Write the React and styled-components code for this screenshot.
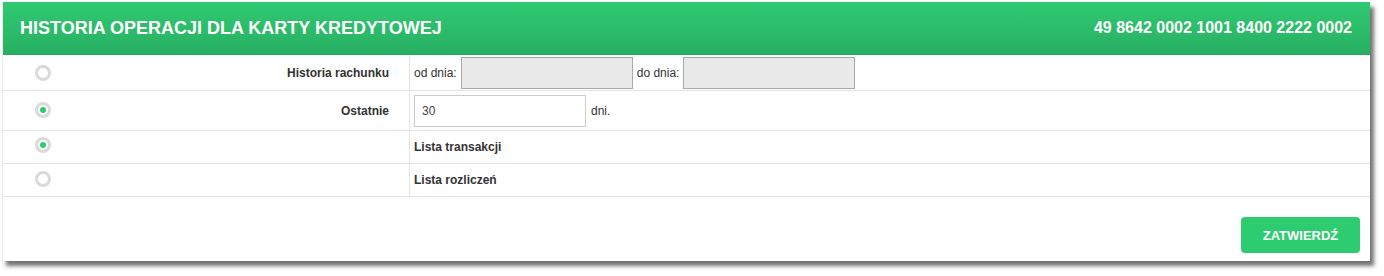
import React from "react";
import styled, { createGlobalStyle } from "styled-components";

const Global = createGlobalStyle`
  html, body { margin: 0; padding: 0; background: #fff; }
  body { font-family: "Liberation Sans", Arial, sans-serif; color: #333; }
`;

const Page = styled.div`
  padding: 2px 14px 14px 2px;
`;

const Panel = styled.div`
  width: 1368px;
  background: #fff;
  box-shadow: 4px 5px 4px rgba(0, 0, 0, 0.55);
  border-left: 1px solid #ececec;
  box-sizing: border-box;
`;

const Header = styled.div`
  height: 52px;
  display: flex;
  align-items: center;
  justify-content: space-between;
  padding: 0 18px 0 17px;
  background: linear-gradient(#30c972, #27b062);
  color: #fff;
  font-weight: bold;
  border-bottom: 1px solid #26a95d;
`;

const Title = styled.div`
  font-size: 18px;
`;

const Account = styled.div`
  font-size: 16px;
`;

const Row = styled.div`
  display: grid;
  grid-template-columns: 407px 1fr;
  border-bottom: 1px solid #e4e4e4;
  min-height: ${(p) => p.$h}px;
`;

const LabelCell = styled.div`
  display: flex;
  align-items: center;
  justify-content: space-between;
  padding: 0 20px 0 32px;
  border-right: 1px solid #e4e4e4;
  font-size: 12px;
  font-weight: bold;
  color: #333;
`;

const ValueCell = styled.div`
  display: flex;
  align-items: center;
  gap: 4px;
  padding: 0 4px;
  font-size: 12px;
  color: #333;
  font-weight: ${(p) => (p.$bold ? "bold" : "normal")};
`;

const Radio = styled.span`
  width: 16px;
  height: 16px;
  box-sizing: border-box;
  border-radius: 50%;
  border: 3px solid #dadada;
  background: #fff;
  display: flex;
  align-items: center;
  justify-content: center;
  margin-top: ${(p) => p.$shift || 0}px;
  &::after {
    content: "";
    width: 6px;
    height: 6px;
    border-radius: 50%;
    background: ${(p) => (p.$checked ? "#2ecc71" : "transparent")};
  }
`;

const DateInput = styled.div`
  width: 172px;
  height: 32px;
  box-sizing: border-box;
  background: #e9e9e9;
  border: 1px solid #a9a9a9;
`;

const NumberInput = styled.div`
  width: 172px;
  height: 32px;
  box-sizing: border-box;
  border: 1px solid #cccccc;
  display: flex;
  align-items: center;
  padding: 0 7px;
  font-size: 12px;
  color: #444;
  margin-right: 1px;
`;

const Footer = styled.div`
  display: flex;
  justify-content: flex-end;
  padding: 20px 10px 8px;
`;

const Button = styled.button`
  width: 119px;
  height: 36px;
  border: none;
  border-radius: 4px;
  background: #2ecc71;
  color: #fff;
  font-family: "Liberation Sans", Arial, sans-serif;
  font-size: 13px;
  font-weight: bold;
`;

export default function App() {
  return (
    <>
      <Global />
      <Page>
        <Panel>
          <Header>
            <Title>HISTORIA OPERACJI DLA KARTY KREDYTOWEJ</Title>
            <Account>49 8642 0002 1001 8400 2222 0002</Account>
          </Header>
          <Row $h={35}>
            <LabelCell>
              <Radio />
              <span>Historia rachunku</span>
            </LabelCell>
            <ValueCell>
              <span>od dnia:</span>
              <DateInput />
              <span>do dnia:</span>
              <DateInput />
            </ValueCell>
          </Row>
          <Row $h={39}>
            <LabelCell>
              <Radio $checked $shift={-2} />
              <span>Ostatnie</span>
            </LabelCell>
            <ValueCell>
              <NumberInput>30</NumberInput>
              <span>dni.</span>
            </ValueCell>
          </Row>
          <Row $h={32}>
            <LabelCell>
              <Radio $checked $shift={-4} />
            </LabelCell>
            <ValueCell $bold>Lista transakcji</ValueCell>
          </Row>
          <Row $h={32}>
            <LabelCell>
              <Radio $shift={-3} />
            </LabelCell>
            <ValueCell $bold>Lista rozliczeń</ValueCell>
          </Row>
          <Footer>
            <Button>ZATWIERDŹ</Button>
          </Footer>
        </Panel>
      </Page>
    </>
  );
}
